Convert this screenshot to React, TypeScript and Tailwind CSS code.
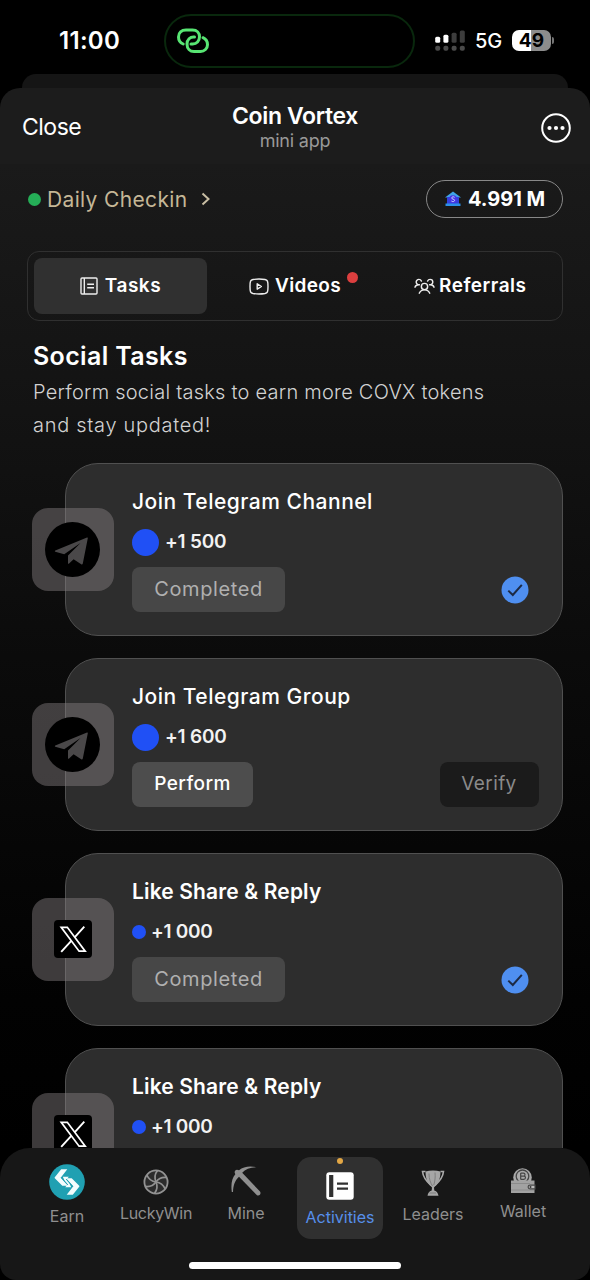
import React from "react";

function LinkIcon() {
  return (
    <svg width="34" height="28" viewBox="0 0 34 28" fill="none" stroke="#58e573" strokeWidth="3" strokeLinecap="round">
      <path d="M7.2 17C4 15.6 2.5 12.900 2.500 10C2.500 5.500 5.500 3 10 3H16.500C21 3 23.500 6 23.500 9.800C23.500 14 20.500 17 16.800 17H15" />
      <path d="M18.500 10C14 9.500 11 13 11 17C11 21.500 14 24.500 18 24.500H24.500C28.500 24.500 31.500 21.500 31.500 17.800C31.500 14.500 30 12 27 10.700" />
    </svg>
  );
}

function SignalIcon() {
  return (
    <svg width="31" height="22" viewBox="0 0 31 22">
      <rect x="0.200" y="6.800" width="5" height="6" rx="1.500" fill="#fff" />
      <rect x="8.400" y="4.800" width="5" height="8" rx="1.500" fill="#fff" />
      <rect x="16.600" y="2.800" width="5" height="10" rx="1.500" fill="#3d3d3d" />
      <rect x="24.800" y="0.500" width="5" height="12.300" rx="1.500" fill="#3d3d3d" />
      {[0.2, 8.4, 16.6, 24.8].map((x) => (
        <rect key={x} x={x} y="15.700" width="5" height="5" rx="2" fill="#4a4a4a" />
      ))}
    </svg>
  );
}

function TaskIcon() {
  return (
    <svg width="18" height="18" viewBox="0 0 18 18" fill="none" stroke="#ededed" strokeWidth="1.400">
      <rect x="1" y="1" width="16" height="16" rx="1" />
      <path d="M4.300 1V17M7.200 7.200H14M7.200 10.800H14" />
    </svg>
  );
}

function VideoIcon() {
  return (
    <svg width="20" height="17" viewBox="0 0 20 17" fill="none" stroke="#ededed" strokeWidth="1.400" strokeLinejoin="round">
      <path d="M1 8.500C1 3 1.500 2 4 1.500C7 1 13 1 16 1.500C18.500 2 19 3 19 8.500C19 14 18.500 15 16 15.500C13 16 7 16 4 15.500C1.500 15 1 14 1 8.500Z" />
      <path d="M8.200 5.800L12.400 8.500L8.200 11.200Z" />
    </svg>
  );
}

function PeopleIcon() {
  return (
    <svg width="21" height="17" viewBox="0 0 22 17" fill="none" stroke="#ededed" strokeWidth="1.500" strokeLinecap="round">
      <circle cx="11" cy="8.500" r="3.300" />
      <path d="M5.500 15.500C6.500 13 8.300 12 11 12S15.500 13 16.500 15.500" />
      <path d="M7.800 2.800C7.200 1.600 6.200 1 5.200 1C3.500 1 2.300 2.300 2.300 3.800C2.300 5.500 3.700 6.700 5.700 6.600M1 9.200C1.600 7.600 3 6.700 5 6.700" />
      <path d="M14.200 2.800C14.800 1.600 15.800 1 16.800 1C18.500 1 19.700 2.300 19.700 3.800C19.700 5.500 18.300 6.700 16.300 6.600M21 9.200C20.400 7.600 19 6.700 17 6.700" />
    </svg>
  );
}

function BankIcon() {
  return (
    <svg width="16" height="16" viewBox="0 0 16 16">
      <path d="M8 0.500L16 6.500H0Z" fill="#3fa4e8" />
      <rect x="2" y="6" width="12" height="7" fill="#3340dc" />
      <circle cx="8" cy="8.200" r="4" fill="#4535e6" />
      <rect x="0.500" y="12.500" width="15" height="2.500" fill="#2b8fe8" />
      <path d="M9.600 6.300C8.800 5.500 6.700 5.600 6.700 7C6.700 8.500 9.600 7.800 9.600 9.300C9.600 10.800 7.200 10.900 6.400 10" fill="none" stroke="#c9d4ff" strokeWidth="1" />
    </svg>
  );
}

function TelegramLogo() {
  return (
    <svg width="55" height="55" viewBox="0 0 55 55">
      <circle cx="27.500" cy="27.500" r="27.500" fill="#000" />
      <path d="M42 15.500L10.300 28.600C9.700 28.900 9.700 29.500 10.300 29.700L19.200 32.200L35.500 21L23 33.600V41.200C23 42 23.700 42 24.100 41.500L28.600 37.200L36.200 42.300C37 42.700 37.600 42.400 37.800 41.600L42.800 16.300C42.900 15.600 42.600 15.200 42 15.500Z" fill="#4a4849" />
    </svg>
  );
}

function XLogo() {
  return (
    <svg width="38" height="38" viewBox="0 0 38 38">
      <rect width="38" height="38" rx="4" fill="#000" />
      <g fill="none" stroke="#fff">
        <path d="M7.200 7.300H13.300L31.200 31.200H25.100Z" strokeWidth="1.700" />
        <path d="M30.300 6.700L20.600 17.300M17.500 20.700L7.200 31.800" strokeWidth="1.900" />
      </g>
    </svg>
  );
}

function CheckBadge() {
  return (
    <svg width="28" height="28" viewBox="0 0 28 28">
      <circle cx="14" cy="14" r="13.500" fill="#4f8ff0" />
      <path d="M7.300 14.600L11.800 19L20.800 8.800" fill="none" stroke="#1d2a44" strokeWidth="2" />
    </svg>
  );
}

function EarnIcon() {
  return (
    <svg width="36" height="36" viewBox="0 0 36 36">
      <circle cx="18" cy="18" r="17.800" fill="#20a0b2" />
      <g fill="#f4fcfd">
        <path d="M12.200 5.300H18.300L11.700 13.800L19 21.800H13.300L5.800 14.300Q5.300 13.800 5.800 13.200Z" />
        <path d="M23.800 30.700H17.700L24.300 22.200L17 14.200H22.700L30.200 21.700Q30.700 22.200 30.200 22.800Z" />
        <path d="M13.800 12.800H19.800L17.300 15.600L20.300 19L22.200 23.200H16.200L18.700 20.400L15.700 17Z" />
      </g>
      <path d="M12.300 13.600L18.800 20.800M17.200 15.200L23.700 22.400" stroke="#20a0b2" strokeWidth="1" />
    </svg>
  );
}

function WheelIcon() {
  return (
    <svg width="26" height="26" viewBox="0 0 26 26" fill="none" stroke="#929292" strokeWidth="1.700">
      <circle cx="13" cy="13" r="11.600" strokeWidth="1.800" fill="#2c2c2c" />
      {[0, 60, 120, 180, 240, 300].map((a) => (
        <path key={a} transform={`rotate(${a} 13 13)`} d="M13 13C11.500 9.500 11.500 5.500 14.500 1.600" />
      ))}
    </svg>
  );
}

function PickaxeIcon() {
  return (
    <svg width="30" height="30" viewBox="0 0 30 30" fill="#8f8f8f">
      <path d="M0.800 26C-0.200 18.500 0.700 12.500 4.300 8.300L3.700 6.800C3.400 5.200 4.500 4 6 3.800L8 4.200C12.500 0.500 18.500 -0.300 25.500 1.200C19 1.500 14.300 3.200 11.200 6.800L29 25.500C30.300 27 29 30.300 26 29.200L8 10.800C3.800 14.500 2.300 19.500 2 26Z" />
    </svg>
  );
}

function NotebookIcon() {
  return (
    <svg width="28" height="28" viewBox="0 0 28 28">
      <rect x="0.300" y="0.300" width="27.400" height="27.400" rx="3" fill="#fff" />
      <path d="M5.200 3V25" stroke="#313131" strokeWidth="4.200" />
      <path d="M11 11.700H22M11 16.700H22" stroke="#313131" strokeWidth="2.200" />
    </svg>
  );
}

function TrophyIcon() {
  return (
    <svg width="24" height="28" viewBox="0 0 24 28">
      <path d="M4.500 2.500H1.500C2 8 5 12 10 16.500M19.500 2.500H22.500C22 8 19 12 14 16.500" fill="none" stroke="#aaa" strokeWidth="1.600" />
      <path d="M4.500 2.500C9 1.300 15 1.300 19.500 2.500C19.500 10 17 15 13 18.500L13.300 21.500C16 22.500 17 24 17.500 26.800H6.500C7 24 8 22.500 10.700 21.500L11 18.500C7 15 4.500 10 4.500 2.500Z" fill="#a6a6a6" />
      <path d="M8 4.500C8 10 9.500 14 11.500 17M14 3.500C14.500 8 14 12 12.800 16M8.500 24H15" fill="none" stroke="#7e7e7e" strokeWidth="1" />
    </svg>
  );
}

function WalletIcon() {
  return (
    <svg width="26" height="26" viewBox="0 0 26 26">
      <circle cx="12.500" cy="9.500" r="9.300" fill="#a8a8a8" />
      <circle cx="12.500" cy="8.300" r="6.300" fill="#aaa" stroke="#454545" strokeWidth="1.300" />
      <path d="M10.700 5V11.500M10.700 5.200H13.500C15.500 5.200 15.500 8.100 13.500 8.100H10.700H14C16 8.200 16 11.300 13.800 11.300H10.700" fill="none" stroke="#454545" strokeWidth="1.200" />
      <path d="M1 12.500H24.500V25H1Z" fill="#a2a2a2" />
      <path d="M1 15.500H20M1 22H24" stroke="#858585" strokeWidth="0.800" />
      <path d="M25 17.200H20C17.500 17.200 17.500 20.800 20 20.800H25Z" fill="#bcbcbc" stroke="#4a4a4a" strokeWidth="1.200" />
      <circle cx="20.500" cy="19" r="1" fill="#333" />
    </svg>
  );
}

function StatusBar() {
  return (
    <div className="flex h-[74px] shrink-0 bg-black">
      <div className="w-[164px] pl-[59px] pt-[26px] text-[24px] font-semibold leading-[30px] tracking-[0.3px]">11:00</div>
      <div className="mt-[14px] flex h-[54px] w-[251px] items-center rounded-full border-2 border-[#09280d] pl-[10px]">
        <LinkIcon />
      </div>
      <div className="flex h-[81px] items-center pl-5">
        <SignalIcon />
        <span className="ml-[9px] text-[20px] font-medium tracking-[-0.2px]">5G</span>
        <div className="ml-[10px] flex h-[21px] w-[39px] items-center justify-center rounded-[7px] bg-[linear-gradient(90deg,#fff_50%,#8c8c8c_50%)] text-[19px] font-bold leading-none text-black">49</div>
        <div className="ml-px h-[7px] w-[2px] rounded-r-full bg-[#747474]" />
      </div>
    </div>
  );
}

type Task = { title: string; reward: string; kind: "telegram" | "x"; status?: "done" | "open" };

const tasks: Task[] = [
  { title: "Join Telegram Channel", reward: "+1 500", kind: "telegram", status: "done" },
  { title: "Join Telegram Group", reward: "+1 600", kind: "telegram", status: "open" },
  { title: "Like Share & Reply", reward: "+1 000", kind: "x", status: "done" },
  { title: "Like Share & Reply", reward: "+1 000", kind: "x" },
];

function TaskCard({ title, reward, kind, status }: Task) {
  const tg = kind === "telegram";
  return (
    <div className="relative ml-[65px] mr-[27.500px] h-[173px] shrink-0 rounded-[33px] border border-[#505050] bg-[#2d2d2d] pl-[66px] pr-[23px] pt-[24px]">
      <div className="absolute left-[-34.500px] top-[44px] flex h-[82.500px] w-[82.500px] items-center justify-center rounded-[16px] bg-[#888083]/45">
        {tg ? <TelegramLogo /> : <XLogo />}
      </div>
      <h3 className={tg ? "h-[27px] whitespace-nowrap text-[21px] font-medium leading-[28px] tracking-[0.500px]" : "h-[27px] whitespace-nowrap text-[21px] font-semibold leading-[28px] tracking-[0.140px]"}>{title}</h3>
      <div className="flex h-[54px] items-center">
        <span className={tg ? "h-[27px] w-[27px] rounded-full bg-[#2050f5]" : "h-[14px] w-[14px] rounded-full bg-[#2050f5]"} />
        <span className={tg ? "mb-[2px] ml-[6px] whitespace-nowrap text-[19px] font-semibold leading-none tracking-[-0.200px] text-[#f2f2f2]" : "mb-[2px] ml-[5px] whitespace-nowrap text-[19px] font-semibold leading-none tracking-[-0.300px] text-[#f2f2f2]"}>{reward}</span>
      </div>
      {status && (
        <div className="-mt-[2px] flex h-[45px] items-center justify-between">
          {status === "done" ? (
            <>
              <button className="h-[45px] w-[153px] rounded-lg bg-[#474747] pb-px text-[20px] tracking-[0.600px] text-[#b0b0b0]">Completed</button>
              <div className="mr-[10px] mt-[1px]"><CheckBadge /></div>
            </>
          ) : (
            <>
              <button className="h-[45px] w-[121px] rounded-lg bg-[#4d4d4d] text-[19px] font-medium tracking-[0.450px] text-white">Perform</button>
              <button className="h-[45px] w-[99px] rounded-lg bg-[#1b1b1b] text-[19px] tracking-[0.400px] text-[#8a8a8a]">Verify</button>
            </>
          )}
        </div>
      )}
    </div>
  );
}

function NavLabel({ children }: { children: React.ReactNode }) {
  return <span className="whitespace-nowrap text-[16px] leading-[20px] text-[#8f8f8f]">{children}</span>;
}

export default function App() {
  return (
    <div className="flex h-[1280px] w-[590px] flex-col overflow-hidden bg-black font-['Inter','Noto_Sans',sans-serif] text-white">
      <StatusBar />
      <div className="mx-[22px] h-[14px] shrink-0 rounded-t-[14px] bg-[#151515]" />
      <header className="flex h-[76px] shrink-0 items-center rounded-t-[20px] bg-[#1c1c1c] pl-[22px] pr-[19px]">
        <div className="w-[120px] pt-[2px] text-[23px] tracking-[-0.500px]">Close</div>
        <div className="flex-1 pr-[3px] pt-[3px] text-center">
          <h1 className="text-[23px] font-semibold leading-[27px] tracking-[-0.350px]">Coin Vortex</h1>
          <p className="text-[18px] leading-[22px] tracking-[-0.200px] text-[#999]">mini app</p>
        </div>
        <div className="flex w-[120px] justify-end pt-1">
          <svg width="30" height="30" viewBox="0 0 30 30">
            <circle cx="15" cy="15" r="13.800" fill="none" stroke="#fff" strokeWidth="2" />
            <circle cx="8.500" cy="15" r="2.100" fill="#fff" />
            <circle cx="15" cy="15" r="2.100" fill="#fff" />
            <circle cx="21.500" cy="15" r="2.100" fill="#fff" />
          </svg>
        </div>
      </header>

      <main className="flex h-[984px] shrink-0 flex-col overflow-hidden bg-[linear-gradient(180deg,#1a1a1a_0%,#131313_25%,#0b0b0b_50%,#020202_85%,#000_100%)]">
        <div className="mt-4 flex h-[38px] shrink-0 items-center justify-between pl-7 pr-[27px]">
          <div className="flex items-center">
            <span className="h-[13px] w-[13px] rounded-full bg-[#25ae57]" />
            <span className="ml-[6px] whitespace-nowrap text-[21px] leading-none tracking-[0.350px] text-[#c5b797]">Daily Checkin</span>
            <svg className="ml-[12px]" width="11" height="14" viewBox="0 0 11 14" fill="none" stroke="#c9bea4" strokeWidth="2"><path d="M2.500 1.500L8.500 7L2.500 12.500" /></svg>
          </div>
          <div className="flex h-[38px] w-[137px] items-center rounded-full border border-[#888] pl-[18px]">
            <BankIcon />
            <span className="ml-[7px] whitespace-nowrap text-[20px] font-bold leading-none">4.991 M</span>
          </div>
        </div>

        <nav className="ml-[27px] mr-[27px] mt-[33px] flex h-[70px] shrink-0 rounded-[12px] border border-[#303030] p-[6px]">
          <div className="flex w-[173px] items-center justify-center rounded-lg bg-[#303030]">
            <TaskIcon />
            <span className="ml-[7px] whitespace-nowrap pt-px text-[19px] font-semibold tracking-[0.500px]">Tasks</span>
          </div>
          <div className="flex w-[178px] items-center pl-[42px]">
            <VideoIcon />
            <span className="ml-[6px] whitespace-nowrap pt-px text-[19px] font-semibold tracking-[0.350px]">Videos</span>
            <span className="mb-[17px] ml-[6px] h-[11px] w-[11px] rounded-full bg-[#dc3f3f]" />
          </div>
          <div className="flex w-[171px] items-center pl-[29px]">
            <PeopleIcon />
            <span className="ml-[4px] whitespace-nowrap pt-px text-[19px] font-semibold tracking-[0.500px]">Referrals</span>
          </div>
        </nav>

        <section className="h-[142px] shrink-0 pl-[33px] pt-[20px]">
          <h2 className="text-[25px] font-semibold leading-[30px] tracking-[0.350px]">Social Tasks</h2>
          <p className="mt-[5px] whitespace-nowrap text-[20px] font-light leading-[33px] text-[#d2d2d2]">
            <span className="block tracking-[0.240px]">Perform social tasks to earn more COVX tokens</span>
            <span className="block tracking-[0.700px]">and stay updated!</span>
          </p>
        </section>

        <div className="flex flex-col gap-[22px]">
          {tasks.map((t, i) => (
            <TaskCard key={i} {...t} />
          ))}
        </div>
      </main>

      <footer className="relative h-[132px] shrink-0 bg-black">
        <div className="flex h-[132px] rounded-b-[16px] rounded-t-[30px] bg-[#171717] pl-[22px]">
          <div className="flex w-[90px] flex-col items-center pt-4"><EarnIcon /><div className="mt-[4px]"><NavLabel>Earn</NavLabel></div></div>
          <div className="flex w-[88px] flex-col items-center pt-[21px] tracking-[-0.300px]"><WheelIcon /><div className="mt-[6px]"><NavLabel>LuckyWin</NavLabel></div></div>
          <div className="flex w-[92px] flex-col items-center pt-[18px]"><PickaxeIcon /><div className="mt-[5px]"><NavLabel>Mine</NavLabel></div></div>
          <div className="mx-[5px] mt-[9px] flex h-[82px] w-[86px] flex-col items-center rounded-[14px] bg-[#303030] pt-px">
            <span className="h-[6px] w-[6px] rounded-full bg-[#e3a745]" />
            <div className="mt-[8px]"><NotebookIcon /></div>
            <span className="mt-[7px] text-[16px] leading-[20px] text-[#568fea]">Activities</span>
          </div>
          <div className="flex w-[90px] flex-col items-center pt-[21px]"><TrophyIcon /><div className="mt-[5px]"><NavLabel>Leaders</NavLabel></div></div>
          <div className="flex w-[90px] flex-col items-center pt-[20px]"><WalletIcon /><div className="mt-[5px]"><NavLabel>Wallet</NavLabel></div></div>
        </div>
        <div className="absolute left-[189px] top-[114px] h-[7px] w-[212px] rounded-full bg-white" />
      </footer>
    </div>
  );
}
